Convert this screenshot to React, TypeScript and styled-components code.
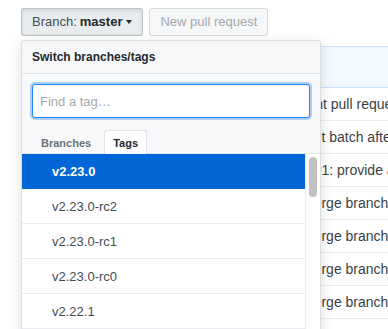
import React from "react";
import styled, { createGlobalStyle } from "styled-components";

const Global = createGlobalStyle`
  html, body { margin: 0; padding: 0; background: #fff; overflow: hidden; }
  body { font-family: "Liberation Sans", Arial, Helvetica, sans-serif; color: #24292e; }
  * { box-sizing: border-box; }
`;

const Page = styled.div`
  position: relative;
  width: 388px;
  height: 329px;
  padding: 8px 0 0 21px;
  overflow: hidden;
`;

const Toolbar = styled.div`
  display: flex;
  gap: 6px;
  height: 28px;
`;

const Button = styled.button<{ $disabled?: boolean; $pressed?: boolean }>`
  display: flex;
  align-items: center;
  height: 28px;
  padding: 0 10px;
  border-radius: 3px;
  font-family: inherit;
  font-size: 13px;
  line-height: 20px;
  border: 1px solid ${(p) => (p.$disabled ? "rgba(27,31,35,0.12)" : "rgba(27,31,35,0.22)")};
  background: ${(p) => (p.$disabled ? "#f5f7f9" : p.$pressed ? "#e9ecef" : "#eff3f6")};
  color: ${(p) => (p.$disabled ? "#a3a8ad" : "#24292e")};
  box-shadow: ${(p) => (p.$pressed ? "inset 0 2px 4px rgba(27,31,35,0.1)" : "none")};
  cursor: default;
`;

const BranchLabel = styled.span`
  color: #444d56;
`;

const BranchName = styled.span`
  font-weight: bold;
  margin-left: 3px;
`;

const Caret = styled.span`
  display: inline-block;
  width: 0;
  height: 0;
  margin-left: 4px;
  border-top: 4px solid #24292e;
  border-left: 3.5px solid transparent;
  border-right: 3.5px solid transparent;
`;

const FileTable = styled.div`
  margin-top: 10px;
  width: 420px;
`;

const CommitBar = styled.div`
  height: 42px;
  background: #f1f8ff;
  border-top: 1px solid #c8e1ff;
  border-bottom: 1px solid #c8e1ff;
`;

const FileRow = styled.div`
  display: grid;
  grid-template-columns: 281px 1fr;
  align-items: center;
  height: 33px;
  border-bottom: 1px solid #eaecef;
  font-size: 14px;
  color: #3a3f45;
  white-space: nowrap;
`;

const Message = styled.span`
  grid-column: 2;
`;

const Accent = styled.span`
  color: #e36209;
`;

const Dropdown = styled.div`
  position: absolute;
  top: 40px;
  left: 21px;
  width: 300px;
  height: 320px;
  background: #fff;
  border: 1px solid rgba(27, 31, 35, 0.15);
  border-radius: 3px;
  box-shadow: 0 3px 12px rgba(27, 31, 35, 0.15);
  overflow: hidden;
`;

const MenuHeader = styled.div`
  background: #f6f8fa;
  border-bottom: 1px solid #e1e4e8;
  padding: 8px 10px;
  font-size: 12px;
  line-height: 16px;
  font-weight: bold;
  color: #24292e;
`;

const Filters = styled.div`
  background: #f6f8fa;
`;

const FilterBox = styled.div`
  padding: 10px;
`;

const FilterInput = styled.input`
  display: block;
  width: 100%;
  height: 34px;
  padding: 0 7px;
  font-family: inherit;
  font-size: 13px;
  color: #24292e;
  background: #fff;
  border: 1px solid #2188ff;
  border-radius: 3px;
  outline: none;
  box-shadow: inset 0 1px 2px rgba(27, 31, 35, 0.075), 0 0 0 2px rgba(3, 102, 214, 0.3);
  &::placeholder { color: #a4a9ae; }
`;

const Tabs = styled.div`
  display: flex;
  gap: 4px;
  padding: 2px 10px 0;
  border-bottom: 1px solid #e1e4e8;
`;

const Tab = styled.div<{ $active?: boolean }>`
  height: 24px;
  padding: 3px 8px;
  margin-bottom: -1px;
  font-size: 11px;
  line-height: 18px;
  font-weight: bold;
  border: 1px solid ${(p) => (p.$active ? "#e1e4e8" : "transparent")};
  border-bottom: none;
  border-radius: 3px 3px 0 0;
  background: ${(p) => (p.$active ? "#fff" : "transparent")};
  color: ${(p) => (p.$active ? "#24292e" : "#6a737d")};
`;

const ListArea = styled.div`
  display: grid;
  grid-template-columns: 1fr 15px;
`;

const List = styled.div`
  display: flex;
  flex-direction: column;
`;

const Item = styled.div<{ $selected?: boolean }>`
  height: 35px;
  padding: 0 8px 0 30px;
  display: flex;
  align-items: center;
  font-size: 13px;
  border-bottom: 1px solid ${(p) => (p.$selected ? "#0366d6" : "#eaecef")};
  background: ${(p) => (p.$selected ? "#0366d6" : "#fff")};
  color: ${(p) => (p.$selected ? "#fff" : "#444d56")};
  font-weight: ${(p) => (p.$selected ? "bold" : "normal")};
`;

const Gutter = styled.div`
  border-left: 1px solid #ececec;
  background: #fff;
`;

const Thumb = styled.div`
  width: 8px;
  height: 40px;
  margin: 3px auto 0;
  border-radius: 4px;
  background: #c1c1c1;
`;

const tags = ["v2.23.0", "v2.23.0-rc2", "v2.23.0-rc1", "v2.23.0-rc0", "v2.22.1", "v2.22.0"];

const messages = [
  "Hint pull request template",
  "Exit batch after 2.23",
  "t001: provide",
  "Merge branch 'jk/fix'",
  "Merge branch 'sg/doc'",
  "Merge branch 'ds/test'",
  "Merge branch 'js/win'",
];

export default function App() {
  return (
    <>
      <Global />
      <Page>
        <Toolbar>
          <Button $pressed>
            <BranchLabel>Branch:</BranchLabel>
            <BranchName>master</BranchName>
            <Caret />
          </Button>
          <Button $disabled>New pull request</Button>
        </Toolbar>
        <FileTable>
          <CommitBar />
          {messages.map((m, i) => (
            <FileRow key={i}>
              <Message>
                {m}
                {i === 2 && <Accent> a</Accent>}
              </Message>
            </FileRow>
          ))}
        </FileTable>
        <Dropdown>
          <MenuHeader>Switch branches/tags</MenuHeader>
          <Filters>
            <FilterBox>
              <FilterInput placeholder="Find a tag…" />
            </FilterBox>
            <Tabs>
              <Tab>Branches</Tab>
              <Tab $active>Tags</Tab>
            </Tabs>
          </Filters>
          <ListArea>
            <List>
              {tags.map((t, i) => (
                <Item key={t} $selected={i === 0}>{t}</Item>
              ))}
            </List>
            <Gutter>
              <Thumb />
            </Gutter>
          </ListArea>
        </Dropdown>
      </Page>
    </>
  );
}
